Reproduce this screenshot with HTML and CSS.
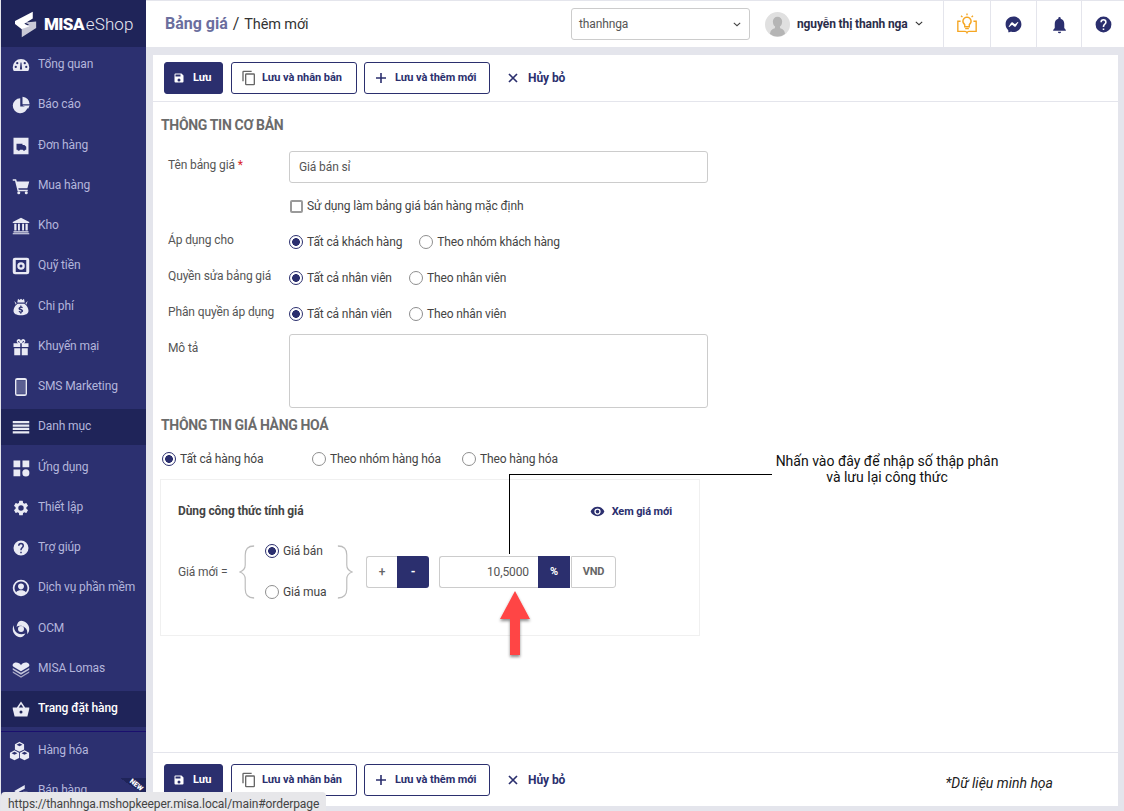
FILE: index.html
```html
<!DOCTYPE html>
<html lang="vi">
<head>
<meta charset="utf-8">
<title>MISA eShop - Bảng giá</title>
<link rel="stylesheet" href="styles.css">
</head>
<body>
<div class="app">
  <aside class="sidebar">
    <div class="logo">
      <svg class="logo-mark" viewBox="0 0 26 32"><path fill="#c9c9d6" d="M25 12.500V20L8 31V21.500l8.500-5.500-5-2.500z"/><path fill="#fff" d="M21 1v8l-10 6 6 3-9 3.500L0 15.500V12z"/></svg>
      <span class="logo-misa">MISA</span><span class="logo-shop">eShop</span>
    </div>
    <nav class="nav">
      <a class="nav-item"><svg class="ni" viewBox="0 0 24 24"><path d="M12 4a11 11 0 0 0-11 11c0 2 .5 3.600 1.300 5h19.400c.8-1.400 1.300-3 1.300-5A11 11 0 0 0 12 4zm-7 12a1.500 1.500 0 1 1 0-3 1.500 1.500 0 0 1 0 3zm2-5a1.500 1.500 0 1 1 0-3 1.500 1.500 0 0 1 0 3zm6.500 7h-3l.9-9.500h1.200zM17 11a1.500 1.500 0 1 1 0-3 1.500 1.500 0 0 1 0 3zm2 5a1.500 1.500 0 1 1 0-3 1.500 1.500 0 0 1 0 3z"/></svg><span>Tổng quan</span></a>
      <a class="nav-item"><svg class="ni" viewBox="0 0 24 24"><path d="M11 3a10 10 0 1 0 10 11H11z"/><path d="M14 1v10h9.500A10 10 0 0 0 14 1zM14 12.500h9.500l-2 4.500z"/></svg><span>Báo cáo</span></a>
      <a class="nav-item"><svg class="ni" viewBox="0 0 24 24"><path fill-rule="evenodd" d="M2 1h20v22H2zM6 9v8h1.200a1.800 1.800 0 0 0 3.500 0h3.600a1.800 1.800 0 0 0 3.500 0H19v-4l-2.500-2.500H14V9z"/></svg><span>Đơn hàng</span></a>
      <a class="nav-item"><svg class="ni" viewBox="0 0 24 24"><path d="M1 3h4.500l1 3H23l-2.500 9H8.500l.5 2h12v2H7.500L4 5H1z"/><circle cx="9" cy="21" r="2"/><circle cx="19" cy="21" r="2"/></svg><span>Mua hàng</span></a>
      <a class="nav-item"><svg class="ni" viewBox="0 0 24 24"><path d="M12 1 1 6.500V8h22V6.500zM3 9h3v9H3zM8 9h2.500v9H8zM13.500 9H16v9h-2.500zM18 9h3v9h-3zM2 19h20v1.500H2zM1 21.500h22V23H1z"/></svg><span>Kho</span></a>
      <a class="nav-item"><svg class="ni" viewBox="0 0 24 24"><path fill-rule="evenodd" d="M4 1h16a3 3 0 0 1 3 3v16a3 3 0 0 1-3 3H4a3 3 0 0 1-3-3V4a3 3 0 0 1 3-3zm1 3v16h14V4zm7 3a5 5 0 1 1 0 10 5 5 0 0 1 0-10zm0 3a2 2 0 1 0 0 4 2 2 0 0 0 0-4z"/></svg><span>Quỹ tiền</span></a>
      <a class="nav-item"><svg class="ni" viewBox="0 0 24 24"><path fill-rule="evenodd" d="M8 1l2 1.500L12 1l2 1.500L16 1l1 5H7zM3 4l3 3-1 2zM21 4l-3 3 1 2zM7.500 7.500h9C20 10 22 13.500 22 17c0 4-4 6-10 6S2 21 2 17c0-3.500 2-7 5.500-9.500zM11 10v1.500c-1.500.3-2.300 1.300-2.300 2.400 0 1.500 1.200 2.100 2.500 2.500 1 .3 1.300.6 1.300 1s-.4.700-1 .7c-.7 0-1.300-.4-1.700-1l-1.100 1c.5.800 1.300 1.300 2.300 1.500V21h1.500v-1.500c1.500-.3 2.300-1.200 2.300-2.400 0-1.500-1.200-2.100-2.500-2.500-1-.3-1.300-.6-1.300-1s.4-.7 1-.7c.6 0 1.100.3 1.400.8l1.100-1c-.5-.7-1.100-1.100-2-1.300V10z"/></svg><span>Chi phí</span></a>
      <a class="nav-item"><svg class="ni" viewBox="0 0 24 24"><path fill-rule="evenodd" d="M7.500 2a3 3 0 0 1 4.500 1.500A3 3 0 0 1 16.500 2c2 1 1.500 4-.5 5h6v5H13V7h-2v5H2V7h6C6 6 5.500 3 7.500 2zm1 2c-1 0-1 1.500 2 2.500-.5-1.500-1-2.500-2-2.500zm7 0c-1 0-1.500 1-2 2.500 3-1 3-2.500 2-2.500zM3 13.500h8V23H3zM13 13.500h8V23h-8z"/></svg><span>Khuyến mại</span></a>
      <a class="nav-item"><svg class="ni" viewBox="0 0 24 24"><path fill-rule="evenodd" d="M7 0h10a3 3 0 0 1 3 3v18a3 3 0 0 1-3 3H7a3 3 0 0 1-3-3V3a3 3 0 0 1 3-3zM6 2.500v19h12v-19z"/><path d="M6.500 3h11v18h-11z" opacity=".25"/></svg><span>SMS Marketing</span></a>
      <a class="nav-item active"><svg class="ni" viewBox="0 0 24 24"><path d="M1 4h22v3H1zM1 8.500h22v3H1zM1 13h22v3H1zM1 17.500h22v3H1z"/></svg><span>Danh mục</span></a>
      <a class="nav-item"><svg class="ni" viewBox="0 0 24 24"><path d="M2 2h9v9H2zM14 2h9v9h-9zM2 14h9v9H2z"/><circle cx="18.500" cy="18.500" r="4.700"/></svg><span>Ứng dụng</span></a>
      <a class="nav-item"><svg class="ni" viewBox="0 0 24 24"><path d="M19.140 12.940c.04-.3.06-.61.06-.94 0-.32-.02-.64-.07-.94l2.030-1.580a.49.49 0 0 0 .12-.61l-1.920-3.320a.49.49 0 0 0-.59-.22l-2.390.96c-.5-.38-1.030-.7-1.620-.94l-.36-2.540a.48.48 0 0 0-.48-.41h-3.840c-.24 0-.43.17-.47.41l-.36 2.540c-.59.24-1.130.57-1.620.94l-2.390-.96c-.22-.08-.47 0-.59.22L2.740 8.870c-.12.21-.08.47.12.61l2.030 1.580c-.05.3-.09.63-.09.94s.02.64.07.94l-2.030 1.580a.49.49 0 0 0-.12.61l1.920 3.320c.12.22.37.29.59.22l2.390-.96c.5.38 1.030.7 1.620.94l.36 2.540c.05.24.24.41.48.41h3.840c.24 0 .44-.17.47-.41l.36-2.540c.59-.24 1.130-.56 1.620-.94l2.390.96c.22.08.47 0 .59-.22l1.920-3.320c.12-.22.07-.47-.12-.61l-2.010-1.580zM12 15.600a3.600 3.600 0 1 1 0-7.200 3.600 3.600 0 0 1 0 7.200z"/></svg><span>Thiết lập</span></a>
      <a class="nav-item"><svg class="ni" viewBox="0 0 24 24"><path d="M12 2a10 10 0 1 0 0 20 10 10 0 0 0 0-20zm1 17h-2v-2h2v2zm2.070-7.750-.9.920C13.450 12.900 13 13.500 13 15h-2v-.5c0-1.100.45-2.100 1.170-2.830l1.240-1.260c.37-.36.59-.86.59-1.410a2 2 0 0 0-4 0H8a4 4 0 0 1 8 0c0 .88-.36 1.680-.93 2.250z"/></svg><span>Trợ giúp</span></a>
      <a class="nav-item"><svg class="ni" viewBox="0 0 24 24"><path fill-rule="evenodd" d="M12 1a11 11 0 1 1 0 22 11 11 0 0 1 0-22zm0 2.500a8.500 8.500 0 0 0-6.500 14c1.300-1.700 3.800-2.500 6.500-2.500s5.200.8 6.500 2.500a8.500 8.500 0 0 0-6.500-14zM12 6a4 4 0 0 1 4 3.700c0 2.300-1.800 4.300-4 4.300s-4-2-4-4.300A4 4 0 0 1 12 6z"/></svg><span>Dịch vụ phần mềm</span></a>
      <a class="nav-item"><svg class="ni" viewBox="0 0 24 24"><path fill-rule="evenodd" d="M12 1c6 0 11 5 11 11 0 3-1 5-3 7 1-3 0-7-3-9-3-3-8-3-11-1 1-5 3-8 6-8zM1 12c0-2 .6-3.500 1.500-5C2 11 4 16 8 18c3 1.500 7 1 10 0-2 3-4 5-7 5C6 23 1 18 1 12zm11-4a4 4 0 1 1 0 8 4 4 0 0 1 0-8z"/></svg><span>OCM</span></a>
      <a class="nav-item"><svg class="ni wide" viewBox="0 0 24 24"><path d="M12 7C10 3 3 2 1 6c-.5 1 0 2 1 3l10 6 10-6c1-1 1.500-2 1-3-2-4-9-3-11 1z"/><path d="M1 10.500l11 6.500 11-6.500v2.500l-11 6.500L1 13z" opacity=".8"/><path d="M1 15l11 6.500L23 15v2l-11 6.500L1 17z" opacity=".65"/></svg><span>MISA Lomas</span></a>
      <a class="nav-item active bright"><svg class="ni" viewBox="0 0 24 24"><path fill-rule="evenodd" d="M12 2l5.500 8H23v2l-2.500 10h-17L1 12v-2h5.500zm0 3.500L9 10h6zM12 14a2 2 0 1 0 0 4 2 2 0 0 0 0-4z"/></svg><span>Trang đặt hàng</span></a>
      <div class="nav-rule"></div>
      <a class="nav-item plain"><svg class="ni cubes" viewBox="0 0 24 24"><path fill-rule="evenodd" d="M12 1l5.500 2.800v6.400L12 13l-5.500-2.800V3.800zM12 2.800 8.500 4.500 12 6.300l3.500-1.800zM6 11.200l5.500 2.800v6.400L6 23.200.5 20.400V14zM6 13l-3.500 1.700L6 16.500l3.500-1.800zM18 11.200l5.500 2.800v6.400L18 23.200l-5.500-2.800V14zM18 13l-3.500 1.700 3.500 1.800 3.500-1.800z"/></svg><span>Hàng hóa</span></a>
      <a class="nav-item plain"><svg class="ni" viewBox="0 0 24 24"><path d="M3 12 17 4v5l-8 4 5 2-5 2zM21 13 7 21v-4l8-4z"/></svg><span>Bán hàng</span><i class="new-flag"><b>NEW</b></i></a>
    </nav>
  </aside>

  <div class="right">
    <header class="topbar">
      <div class="crumb"><strong>Bảng giá</strong><em>/</em><span>Thêm mới</span></div>
      <div class="branch"><span>thanhnga</span><svg class="chev" viewBox="0 0 10 6"><path d="M1 1l4 3.500L9 1" fill="none" stroke="#444" stroke-width="1.300"/></svg></div>
      <div class="user">
        <svg class="avatar" viewBox="0 0 26 26"><circle cx="13" cy="13" r="13" fill="#e0e0e0"/><path fill="#b5b5b5" d="M13 5a4.800 4.800 0 0 0-4.800 5.200c0 2.400 1 4 2.300 5l-.3 1.800C7 18 5.500 19.500 5.200 22.800a13 13 0 0 0 15.600 0C20.500 19.500 19 18 15.800 17l-.3-1.800c1.300-1 2.300-2.600 2.300-5A4.800 4.800 0 0 0 13 5z"/></svg>
        <b>nguyễn thị thanh nga</b>
        <svg class="chev2" viewBox="0 0 10 6"><path d="M1 1l4 3.500L9 1" fill="none" stroke="#333" stroke-width="1.300"/></svg>
      </div>
      <div class="tool t1"><svg class="t-idea" viewBox="0 0 24 24" fill="none" stroke="#f5a623" stroke-width="1.500"><path d="M12 4.500a4.500 4.500 0 0 0-2.500 8.200V15h5v-2.300A4.500 4.500 0 0 0 12 4.500zM10 17h4M12 .5V2.500M5.500 3l1.500 1.500M18.500 3 17 4.500M5 9H2v11h8c1 0 1.500.5 2 1.500.5-1 1-1.500 2-1.500h8V9h-3"/></svg></div>
      <div class="tool t2"><svg class="t-ic" viewBox="0 0 24 24"><path fill="#2b2f6e" d="M12 2C6.360 2 2 6.130 2 11.700c0 2.910 1.190 5.440 3.140 7.170.16.130.26.350.27.570l.05 1.780c.04.570.61.940 1.130.710l1.980-.87c.17-.07.36-.09.53-.05.9.250 1.900.390 2.900.390 5.640 0 10-4.130 10-9.700C22 6.130 17.640 2 12 2zm6 7.460-2.940 4.670c-.47.740-1.470.920-2.170.400l-2.340-1.750a.6.6 0 0 0-.72 0l-3.160 2.400c-.42.320-.97-.18-.69-.63l2.940-4.670c.47-.74 1.470-.92 2.170-.4l2.340 1.750c.21.160.51.160.72 0l3.160-2.400c.42-.32.970.18.690.630z"/></svg></div>
      <div class="tool t3"><svg class="t-ic" viewBox="0 0 24 24"><path fill="#2b2f6e" d="M12 23a2 2 0 0 0 2-2h-4a2 2 0 0 0 2 2zm6-6.500V11c0-3.070-1.640-5.640-4.500-6.320V4a1.500 1.500 0 0 0-3 0v.68C7.630 5.360 6 7.920 6 11v5.500L4 19v1h16v-1z"/></svg></div>
      <div class="tool t4"><svg class="t-ic" viewBox="0 0 24 24"><path fill="#2b2f6e" d="M12 2a10 10 0 1 0 0 20 10 10 0 0 0 0-20zm1 17h-2v-2h2v2zm2.070-7.750-.9.920C13.450 12.900 13 13.500 13 15h-2v-.5c0-1.100.45-2.100 1.170-2.830l1.240-1.260c.37-.36.590-.86.590-1.410a2 2 0 0 0-4 0H8a4 4 0 0 1 8 0c0 .88-.36 1.680-.93 2.250z"/></svg></div>
    </header>

    <main class="panel">
      <div class="actions top">
        <button class="btn primary"><svg class="bi" viewBox="0 0 24 24"><path fill="#fff" d="M17 3H5a2 2 0 0 0-2 2v14a2 2 0 0 0 2 2h14a2 2 0 0 0 2-2V7l-4-4zm-5 16a3 3 0 1 1 0-6 3 3 0 0 1 0 6zm3-10H5V5h10v4z"/></svg>Lưu</button>
        <button class="btn"><svg class="bi copy" viewBox="0 0 24 24"><path fill="#666" d="M16 1H4a2 2 0 0 0-2 2v14h2V3h12V1zm3 4H8a2 2 0 0 0-2 2v14a2 2 0 0 0 2 2h11a2 2 0 0 0 2-2V7a2 2 0 0 0-2-2zm0 16H8V7h11v14z"/></svg>Lưu và nhân bản</button>
        <button class="btn"><svg class="bi" viewBox="0 0 12 12"><path d="M5.200 1h1.600v4.200H11v1.600H6.800V11H5.200V6.800H1V5.200h4.200z" fill="#2b2f6e"/></svg>Lưu và thêm mới</button>
        <button class="btn ghost"><svg class="bi" viewBox="0 0 12 12"><path d="M2 2l8 8M10 2l-8 8" stroke="#2b2f6e" stroke-width="1.700" fill="none"/></svg>Hủy bỏ</button>
      </div>

      <section class="body">
        <h2 class="sec first">THÔNG TIN CƠ BẢN</h2>
        <div class="row r-name"><label class="lb">Tên bảng giá <i>*</i></label><div class="inp">Giá bán sỉ</div></div>
        <div class="row r-check"><label class="lb"></label><span class="check"><span class="box"></span>Sử dụng làm bảng giá bán hàng mặc định</span></div>
        <div class="row r-radio"><label class="lb">Áp dụng cho</label><span class="rad on">Tất cả khách hàng</span><span class="rad">Theo nhóm khách hàng</span></div>
        <div class="row r-radio"><label class="lb">Quyền sửa bảng giá</label><span class="rad on">Tất cả nhân viên</span><span class="rad">Theo nhân viên</span></div>
        <div class="row r-radio"><label class="lb">Phân quyền áp dụng</label><span class="rad on">Tất cả nhân viên</span><span class="rad">Theo nhân viên</span></div>
        <div class="row r-area"><label class="lb">Mô tả</label><div class="area"></div></div>

        <h2 class="sec second">THÔNG TIN GIÁ HÀNG HOÁ</h2>
        <div class="goods"><span class="rad on g1">Tất cả hàng hóa</span><span class="rad g2">Theo nhóm hàng hóa</span><span class="rad">Theo hàng hóa</span></div>

        <div class="card">
          <div class="card-head"><b>Dùng công thức tính giá</b>
            <span class="preview"><svg viewBox="0 0 24 24"><path fill="#2b2f6e" d="M12 4.500C7 4.500 2.730 7.610 1 12c1.730 4.390 6 7.500 11 7.500s9.270-3.110 11-7.500c-1.730-4.390-6-7.500-11-7.500zM12 17a5 5 0 1 1 0-10 5 5 0 0 1 0 10zm0-8a3 3 0 1 0 0 6 3 3 0 0 0 0-6z"/></svg>Xem giá mới</span>
          </div>
          <div class="formula">
            <span class="eq">Giá mới =</span>
            <svg class="brace" viewBox="0 0 18 54" preserveAspectRatio="none"><path d="M17 1C10 1 7 4 7 10v10c0 4-3 6-6 7 3 1 6 3 6 7v10c0 6 3 9 10 9" fill="none" stroke="#bcbcbc" stroke-width="1.300"/></svg>
            <div class="base"><span class="rad on">Giá bán</span><span class="rad">Giá mua</span></div>
            <svg class="brace flip" viewBox="0 0 18 54" preserveAspectRatio="none"><path d="M17 1C10 1 7 4 7 10v10c0 4-3 6-6 7 3 1 6 3 6 7v10c0 6 3 9 10 9" fill="none" stroke="#bcbcbc" stroke-width="1.300"/></svg>
            <div class="seg"><span class="s-plus">+</span><span class="s-minus">-</span></div>
            <div class="val">10,5000</div><span class="unit u-on">%</span><span class="unit u-off">VND</span>
          </div>
        </div>
      </section>

      <div class="actions bottom">
        <button class="btn primary"><svg class="bi" viewBox="0 0 24 24"><path fill="#fff" d="M17 3H5a2 2 0 0 0-2 2v14a2 2 0 0 0 2 2h14a2 2 0 0 0 2-2V7l-4-4zm-5 16a3 3 0 1 1 0-6 3 3 0 0 1 0 6zm3-10H5V5h10v4z"/></svg>Lưu</button>
        <button class="btn"><svg class="bi copy" viewBox="0 0 24 24"><path fill="#666" d="M16 1H4a2 2 0 0 0-2 2v14h2V3h12V1zm3 4H8a2 2 0 0 0-2 2v14a2 2 0 0 0 2 2h11a2 2 0 0 0 2-2V7a2 2 0 0 0-2-2zm0 16H8V7h11v14z"/></svg>Lưu và nhân bản</button>
        <button class="btn"><svg class="bi" viewBox="0 0 12 12"><path d="M5.200 1h1.600v4.200H11v1.600H6.800V11H5.200V6.800H1V5.200h4.200z" fill="#2b2f6e"/></svg>Lưu và thêm mới</button>
        <button class="btn ghost"><svg class="bi" viewBox="0 0 12 12"><path d="M2 2l8 8M10 2l-8 8" stroke="#2b2f6e" stroke-width="1.700" fill="none"/></svg>Hủy bỏ</button>
        <span class="note">*Dữ liệu minh họa</span>
      </div>
    </main>
  </div>
</div>

<div class="callout-line"></div>
<div class="callout-text">Nhấn vào đây để nhập số thập phân<br>và lưu lại công thức</div>
<svg class="arrow" viewBox="0 0 44 80"><defs><filter id="sh" x="-30%" y="-10%" width="160%" height="130%"><feDropShadow dx="0" dy="2" stdDeviation="1.500" flood-color="#000" flood-opacity=".45"/></filter></defs><path d="M22 6 37 34H27V70H17V34H7z" fill="#ff4545" filter="url(#sh)"/></svg>
<div class="status">https://thanhnga.mshopkeeper.misa.local/main#orderpage</div>
</body>
</html>
```

FILE: styles.css
```css
*, *::before, *::after { box-sizing: border-box; }
html, body { margin: 0; height: 811px; overflow: hidden; }
body { font-family: Roboto, "Noto Sans", sans-serif; font-size: 12px; letter-spacing: -.12px; color: #333; background: #e4e5ec; position: relative; }
.app { display: flex; height: 811px; padding-left: 1px; }

.sidebar { width: 145px; flex: none; background: #2c3070; overflow: hidden; }
.logo { height: 47px; background: #1f2459; position: relative; z-index: 1; display: flex; align-items: center; padding: 1px 0 0 14px; color: #fff; letter-spacing: 0; }
.logo-mark { width: 22px; height: 31px; margin-right: 7px; flex: none; }
.logo-misa { font-size: 17px; font-weight: 900; letter-spacing: -.6px; }
.logo-shop { font-size: 17px; font-weight: 300; margin-left: 2px; color: #e8e8f2; letter-spacing: .1px; }
.nav { display: flex; flex-direction: column; }
.nav-item { height: 36px; margin-bottom: 4.25px; display: flex; align-items: center; padding-left: 11px; color: #b4b6dc; position: relative; flex: none; }
.nav-item span { margin-left: 8px; position: relative; top: -1px; }
.ni { width: 18px; height: 18px; fill: #e9eaf4; flex: none; }
.ni.wide { width: 20px; margin-left: -1px; margin-right: -1px; }
.ni.cubes { width: 21px; height: 20px; margin-left: -3px; }
.nav-item.active { background: #1f2459; }
.nav-item.bright { color: #fff; margin-bottom: 3.5px; }
.nav-item.bright span { font-weight: 500; }
.nav-rule { height: 1px; background: #1a0f6e; flex: none; margin-bottom: 2px; }
.nav-item.plain { height: 34px; margin-bottom: 6.25px; }
.new-flag { position: absolute; right: 0; top: 4px; width: 26px; height: 18px; background: linear-gradient(to top right, transparent 50%, #1f2459 50%); }
.new-flag b { position: absolute; left: 9px; top: 3px; color: #fff; font: 900 7px Roboto, sans-serif; transform: rotate(38deg); }

.right { flex: 1; min-width: 0; display: flex; flex-direction: column; }
.topbar { height: 47px; background: #fff; border-top: 1px solid #e4e5ec; display: flex; align-items: stretch; flex: none; }
.crumb { width: 425px; padding: 14px 0 0 19px; font-size: 14.500px; color: #333; display: flex; align-items: baseline; line-height: 18px; }
.crumb strong { font-size: 16px; font-weight: 700; color: #6b6e9e; letter-spacing: 0; }
.crumb em { font-style: normal; margin: 0 5px 0 5px; font-size: 16px; }
.branch { width: 179px; height: 32px; margin-top: 7px; border: 1px solid #ccc; border-radius: 3px; display: flex; align-items: center; justify-content: space-between; padding: 0 8px 0 7px; color: #555; flex: none; }
.chev { width: 8px; height: 5px; }
.user { width: 193px; padding-left: 15px; display: flex; align-items: center; flex: none; }
.avatar { width: 25px; height: 25px; flex: none; margin-right: 7px; }
.user b { font-weight: 700; color: #2b2d4a; white-space: nowrap; }
.chev2 { width: 8px; height: 5px; margin-left: 7px; position: relative; top: -1px; }
.tool { border-left: 1px solid #e4e5ec; display: flex; align-items: center; justify-content: center; flex: none; }
.t1 { width: 47px; }
.t2 { width: 46px; }
.t3 { width: 45px; }
.t4 { flex: 1; }
.t-idea { width: 22px; height: 24px; }
.t-ic { width: 19px; height: 19px; }

.panel { flex: 1; margin: 8px 6px 5px 7px; background: #fff; display: flex; flex-direction: column; min-height: 0; }
.actions { display: flex; align-items: center; flex: none; padding-left: 11px; }
.actions.top { height: 47px; border-bottom: 1px solid #e4e5ec; padding-bottom: 1px; }
.actions.bottom { height: 54px; border-top: 1px solid #e4e5ec; }
.btn { height: 32px; width: 126px; border: 1px solid #2b2f6e; border-radius: 3px; background: #fff; color: #2b2f6e; font: 700 11px Roboto, sans-serif; letter-spacing: -.07px; display: flex; align-items: center; justify-content: flex-start; padding: 0 0 0 10px; margin-right: 7px; white-space: nowrap; }
.btn.primary { width: 59px; background: #2b2f6e; color: #fff; margin-right: 8px; padding-left: 8px; }
.bi { width: 12px; height: 12px; margin-right: 8px; flex: none; }
.bi.copy { width: 16px; height: 16px; margin-left: -1px; margin-right: 5px; }
.btn.ghost { width: auto; border: none; font-size: 12px; }
.btn.ghost .bi { margin-right: 9px; }
.note { position: absolute; right: 71px; bottom: 20px; font-style: italic; color: #222; font-size: 14px; letter-spacing: 0; }

.body { flex: 1; min-height: 0; padding: 0 0 0 8px; position: relative; }
.sec { margin: 0; font-size: 14px; font-weight: 700; color: #6b6b6b; line-height: 16px; letter-spacing: -.33px; }
.sec.first { padding-top: 15px; height: 49px; }
.sec.second { margin-top: 9px; height: 27px; }
.row { display: flex; align-items: center; }
.lb { width: 128px; flex: none; padding-left: 7px; color: #555; white-space: nowrap; }
.lb i { color: #d9252a; font-style: normal; }
.r-name { height: 32px; align-items: flex-start; }
.r-name .lb { padding-top: 7px; }
.inp { width: 419px; height: 32px; border: 1px solid #ccc; border-radius: 3px; padding: 0 9px; line-height: 30px; color: #555; }
.r-check { height: 40px; align-items: flex-start; padding-top: 16px; }
.check { display: flex; align-items: center; color: #444; white-space: nowrap; margin-left: 1px; }
.box { width: 13px; height: 13px; border: 2px solid #9a9a9a; border-radius: 2px; margin-right: 4px; flex: none; }
.r-radio { height: 36px; }
.r-radio .lb { position: relative; top: -1px; }
.r-radio .rad { margin-top: 2px; }
.rad { display: inline-flex; align-items: center; color: #444; white-space: nowrap; }
.rad::before { content: ""; width: 14px; height: 14px; border-radius: 50%; border: 1.500px solid #8f8f8f; margin-right: 4px; flex: none; background: #fff; }
.rad.on::before { border-color: #2b2f6e; background: radial-gradient(circle, #2b2f6e 0 3.600px, #fff 4.100px); }
.r-radio .rad:first-of-type { margin-right: 17px; }
.r-area { height: 74px; align-items: flex-start; margin-top: 3px; }
.r-area .lb { padding-top: 7px; }
.area { width: 419px; height: 74px; border: 1px solid #ccc; border-radius: 3px; }
.goods { height: 29px; display: flex; align-items: center; padding-left: 1px; }
.goods .g1 { width: 150px; }
.goods .g2 { width: 150px; }
.card { width: 540px; height: 157px; margin: 6px 0 0 -1px; border: 1px solid #f0f0f0; padding: 0 27px 0 17px; }
.card-head { display: flex; justify-content: space-between; align-items: center; height: 61px; padding-top: 1px; }
.card-head b { font-weight: 700; color: #444; }
.preview { display: inline-flex; align-items: center; font-size: 11px; font-weight: 700; color: #2b2f6e; }
.preview svg { width: 15px; height: 15px; margin-right: 7px; }
.formula { display: flex; align-items: center; height: 61px; }
.eq { width: 61px; color: #555; flex: none; }
.brace { width: 16px; height: 54px; flex: none; }
.brace.flip { transform: scaleX(-1); }
.base { width: 72px; margin-left: 10px; height: 55px; display: flex; flex-direction: column; justify-content: space-between; }
.seg { display: flex; margin-left: 13px; height: 32px; }
.s-plus, .s-minus { display: flex; align-items: center; justify-content: center; height: 32px; font-weight: 700; }
.s-plus { width: 31px; border: 1px solid #ccc; border-right: none; border-radius: 3px 0 0 3px; color: #666; font-weight: 500; }
.s-minus { width: 32px; background: #2b2f6e; color: #fff; border-radius: 0 3px 3px 0; }
.val { width: 99px; height: 32px; margin-left: 10px; border: 1px solid #ccc; border-right: none; border-radius: 3px 0 0 3px; text-align: right; padding-right: 9px; line-height: 31px; color: #555; font-size: 12px; }
.unit { height: 32px; display: flex; align-items: center; justify-content: center; font-size: 11px; font-weight: 700; }
.u-on { width: 32px; background: #2b2f6e; color: #fff; }
.u-off { width: 45px; margin-left: 1px; border: 1px solid #ccc; border-radius: 0 3px 3px 0; color: #666; }

.callout-line { position: absolute; left: 509px; top: 474px; width: 263px; height: 80px; border-left: 1px solid #000; border-top: 1px solid #000; }
.callout-text { position: absolute; left: 760px; top: 453px; width: 254px; text-align: center; font-size: 14px; line-height: 16px; color: #111; letter-spacing: 0; }
.arrow { position: absolute; left: 493px; top: 585px; width: 44px; height: 80px; }
.status { position: absolute; left: 1px; top: 792px; width: 325px; height: 19px; background: #e7e7ea; border-radius: 4px 4px 0 0; padding: 5px 0 0 7px; font-size: 12px; line-height: 15px; color: #444; letter-spacing: -.08px; white-space: nowrap; }
```
